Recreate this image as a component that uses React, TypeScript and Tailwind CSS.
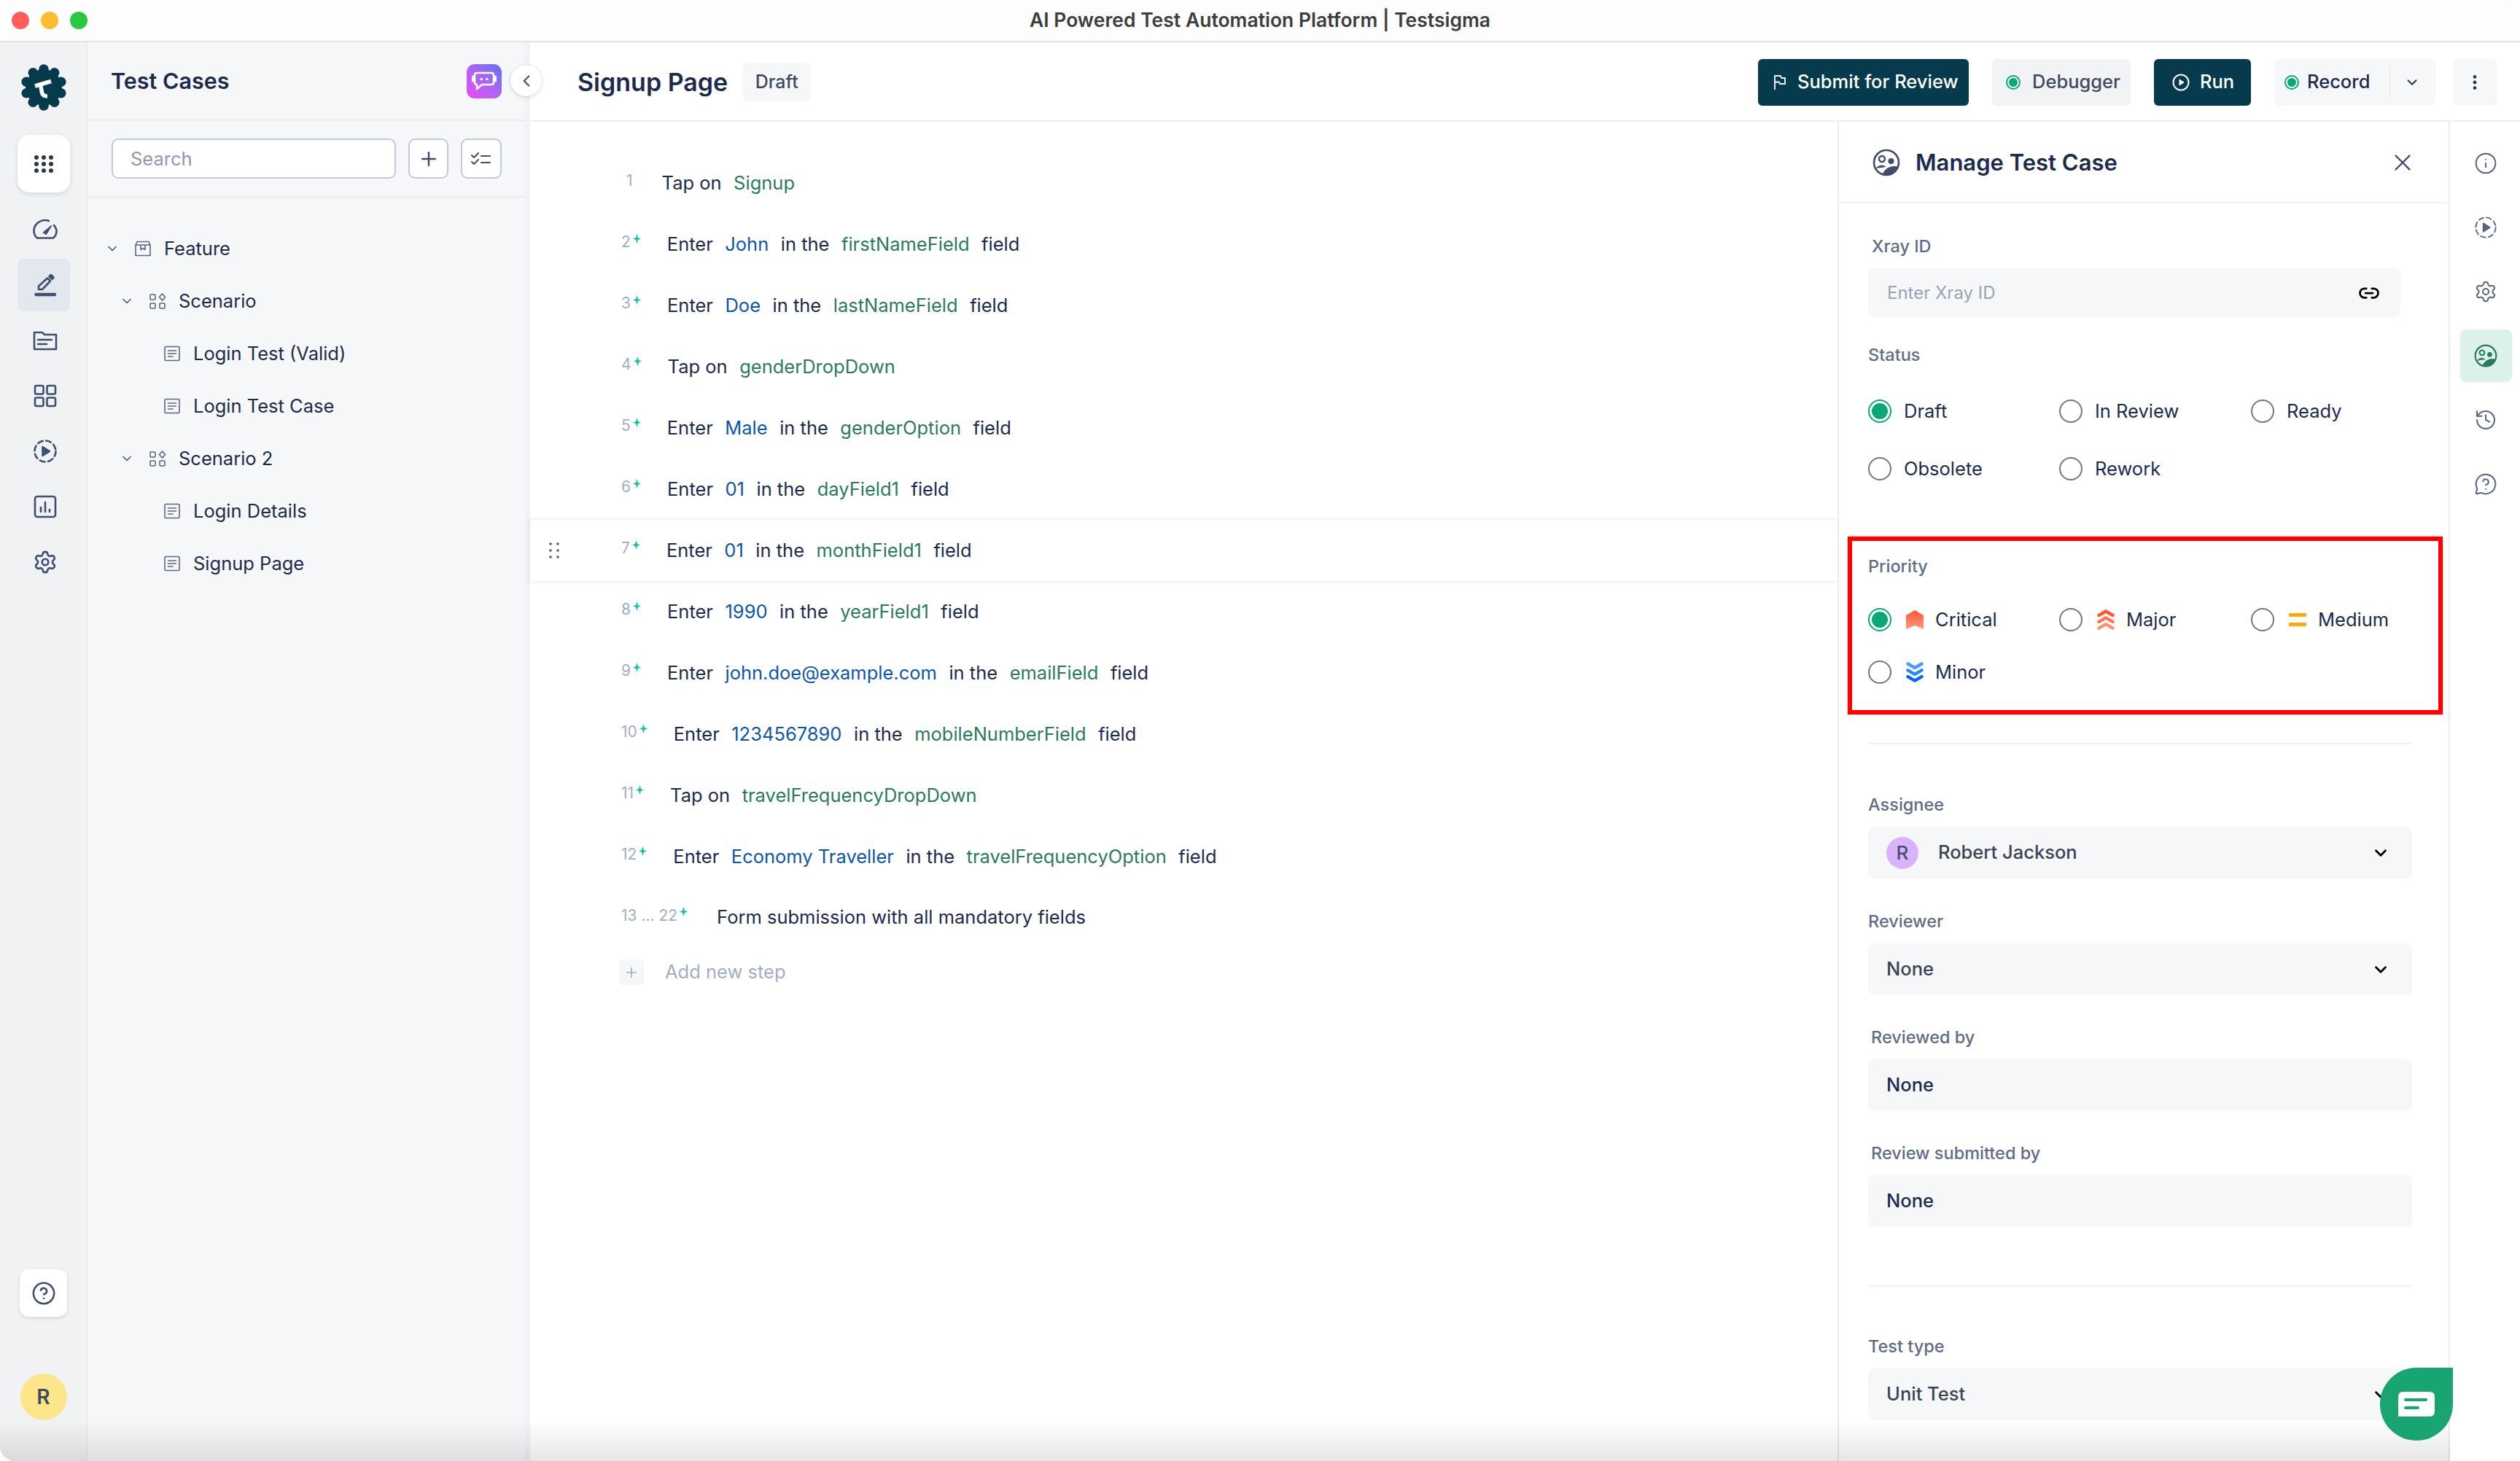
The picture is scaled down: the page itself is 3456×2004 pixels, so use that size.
import {
  ChevronDown,
  ChevronLeft,
  CircleHelp,
  EllipsisVertical,
  Info,
  Link2,
  History,
  MessageCircleQuestion,
  Plus,
  Settings,
  X,
} from 'lucide-react';

type Part = [string, 't' | 'b' | 'g'];

const steps: { n: string; parts: Part[]; hover?: boolean }[] = [
  { n: '2', parts: [['Enter', 't'], ['John', 'b'], ['in the', 't'], ['firstNameField', 'g'], ['field', 't']] },
  { n: '3', parts: [['Enter', 't'], ['Doe', 'b'], ['in the', 't'], ['lastNameField', 'g'], ['field', 't']] },
  { n: '4', parts: [['Tap on', 't'], ['genderDropDown', 'g']] },
  { n: '5', parts: [['Enter', 't'], ['Male', 'b'], ['in the', 't'], ['genderOption', 'g'], ['field', 't']] },
  { n: '6', parts: [['Enter', 't'], ['01', 'b'], ['in the', 't'], ['dayField1', 'g'], ['field', 't']] },
  { n: '7', hover: true, parts: [['Enter', 't'], ['01', 'b'], ['in the', 't'], ['monthField1', 'g'], ['field', 't']] },
  { n: '8', parts: [['Enter', 't'], ['1990', 'b'], ['in the', 't'], ['yearField1', 'g'], ['field', 't']] },
  { n: '9', parts: [['Enter', 't'], ['john.doe@example.com', 'b'], ['in the', 't'], ['emailField', 'g'], ['field', 't']] },
  { n: '10', parts: [['Enter', 't'], ['1234567890', 'b'], ['in the', 't'], ['mobileNumberField', 'g'], ['field', 't']] },
  { n: '11', parts: [['Tap on', 't'], ['travelFrequencyDropDown', 'g']] },
  { n: '12', parts: [['Enter', 't'], ['Economy Traveller', 'b'], ['in the', 't'], ['travelFrequencyOption', 'g'], ['field', 't']] },
];

const partColor = { t: 'text-[#1c2a4d]', b: 'text-[#0d56a6]', g: 'text-[#2b7a5e]' };

function Sparkle() {
  return (
    <svg width="11" height="13" viewBox="0 0 11 13" className="mt-[-16px] ml-[3px] shrink-0">
      <path d="M5.5 0 L7 5 L11 6.5 L7 8 L5.5 13 L4 8 L0 6.5 L4 5 z" fill="#14c4a4" />
    </svg>
  );
}

function Logo() {
  const bumps = [0, 1, 2, 3, 4, 5, 6, 7, 8, 9];
  return (
    <svg width="64" height="64" viewBox="0 0 64 64">
      <circle cx="32" cy="32" r="25" fill="#063b4d" />
      {bumps.map((b) => (
        <circle
          key={b}
          cx={32 + 25 * Math.cos((b * Math.PI) / 5 - Math.PI / 2)}
          cy={32 + 25 * Math.sin((b * Math.PI) / 5 - Math.PI / 2)}
          r="6.8"
          fill="#063b4d"
        />
      ))}
      <path d="M27 25 L29.5 39 Q30.5 44 37 44 M20 30 L42 23.5" stroke="white" strokeWidth="5.5" fill="none" strokeLinejoin="round" />
    </svg>
  );
}

function RailIcon({ children, active }: { children: React.ReactNode; active?: boolean }) {
  return (
    <div className={`w-[72px] h-[72px] flex items-center justify-center rounded-[8px] pl-[4px] ${active ? 'bg-[#e3e7ee]' : ''}`}>
      <svg width="34" height="34" viewBox="0 0 34 34" fill="none" stroke="#3f4f6e" strokeWidth="2.6" strokeLinecap="round" strokeLinejoin="round">
        {children}
      </svg>
    </div>
  );
}

function DashedPlay({ color = '#3f4f6e' }: { color?: string }) {
  return (
    <>
      <circle cx="17" cy="17" r="14.5" stroke={color} strokeDasharray="7 4.5" />
      <path d="M13.5 11 L23 17 L13.5 23 z" fill={color} stroke={color} />
    </>
  );
}

function TreeChevron() {
  return <ChevronDown size={20} className="text-[#4a5873] shrink-0" strokeWidth={2} />;
}

function ScenarioIcon() {
  return (
    <svg width="22" height="22" viewBox="0 0 22 22" fill="none" stroke="#5a6883" strokeWidth="1.6" className="shrink-0">
      <rect x="1" y="2" width="7" height="7" rx="1" />
      <rect x="1" y="14" width="7" height="7" rx="1" />
      <rect x="14" y="14" width="7" height="7" rx="1" />
      <path d="M17.5 1 L21.5 5.5 L17.5 10 L13.5 5.5 z" />
    </svg>
  );
}

function CaseIcon() {
  return (
    <svg width="22" height="22" viewBox="0 0 22 22" fill="none" stroke="#5a6883" strokeWidth="1.6" strokeLinecap="round" className="shrink-0">
      <rect x="1" y="1.5" width="20" height="19" rx="1.5" />
      <path d="M5.5 7 H16.5 M5.5 11 H16.5 M5.5 15 H12" />
    </svg>
  );
}

function FeatureIcon() {
  return (
    <svg width="22" height="22" viewBox="0 0 22 22" fill="none" stroke="#5a6883" strokeWidth="1.6" strokeLinejoin="round" className="shrink-0">
      <path d="M3 1.5 H19 L21 6 V20.5 H1 V6 z" />
      <path d="M1 6 H21 M8 6 V12.5 L11 10.5 L14 12.5 V6" />
    </svg>
  );
}

function TreeRow({ indent, icon, label, chevron }: { indent: string; icon: React.ReactNode; label: string; chevron?: boolean }) {
  return (
    <div className={`h-[72px] flex items-center ${indent}`}>
      {chevron ? <span className="w-[41px] shrink-0"><TreeChevron /></span> : null}
      {icon}
      <span className="ml-[18px] text-[25.5px] leading-none text-[#1c2a4d]">{label}</span>
    </div>
  );
}

function ManageIcon({ color = '#3f4d68', size = 38 }: { color?: string; size?: number }) {
  return (
    <svg width={size} height={size} viewBox="0 0 38 38" fill="none" className="shrink-0">
      <circle cx="19" cy="19" r="17" stroke={color} strokeWidth="2.6" />
      <circle cx="13" cy="14" r="4" stroke={color} strokeWidth="2.4" />
      <circle cx="25.5" cy="17" r="4" fill={color} />
      <path d="M5 27 C10 21 16 23 18 25 M14 35 C18 26 26 23 35 25 C33 31 26 37 19 36 z" stroke={color} strokeWidth="1" fill={color} />
    </svg>
  );
}

function StatusDot() {
  return (
    <span className="w-[20px] h-[20px] rounded-full border-2 border-[#0aa874] p-[2px] shrink-0">
      <span className="block w-full h-full rounded-full bg-[#0aa874]" />
    </span>
  );
}

function Radio({ checked }: { checked?: boolean }) {
  return (
    <span className={`w-[32px] h-[32px] rounded-full border-2 flex items-center justify-center shrink-0 bg-white ${checked ? 'border-[#0aa874]' : 'border-[#767676]'}`}>
      {checked ? <span className="w-[22px] h-[22px] rounded-full bg-[#0aa874]" /> : null}
    </span>
  );
}

function RadioItem({ label, checked, icon }: { label: string; checked?: boolean; icon?: React.ReactNode }) {
  return (
    <div className="flex items-center">
      <Radio checked={checked} />
      {icon ? <span className="ml-[20px] mr-[16px] w-[24px] flex justify-center">{icon}</span> : <span className="w-[17px]" />}
      <span className="text-[25.5px] leading-none text-[#1c2a4d]">{label}</span>
    </div>
  );
}

function FieldLabel({ children, className = '' }: { children: React.ReactNode; className?: string }) {
  return <div className={`h-[30px] flex items-center text-[23.5px] font-medium text-[#5f6c85] ${className}`}>{children}</div>;
}

function Box({ value, chevron, color = 'text-[#1c2a4d]', avatar }: { value: string; chevron?: boolean; color?: string; avatar?: boolean }) {
  return (
    <div className="mt-[15px] h-[71px] w-[746px] rounded-[8px] bg-[#f6f7f9] flex items-center justify-between pl-[25px] pr-[30px]">
      <div className={`flex items-center text-[25.5px] font-medium ${color}`}>
        {avatar ? (
          <span className="w-[44px] h-[44px] mr-[27px] rounded-full bg-[#d8b4fe] flex items-center justify-center text-[26px] text-[#475066]">R</span>
        ) : null}
        {value}
      </div>
      {chevron ? <ChevronDown size={26} className="text-black" strokeWidth={2.6} /> : null}
    </div>
  );
}

function SideIcon({ children, active }: { children: React.ReactNode; active?: boolean }) {
  return (
    <div className={`w-[71px] h-[72px] rounded-[8px] flex items-center justify-center ${active ? 'bg-[#dcf1e7]' : ''}`}>{children}</div>
  );
}

function Chevrons({ up }: { up?: boolean }) {
  const cols = up ? ['#ff5630', '#ff7452', '#ff8f73'] : ['#4c9aff', '#2684ff', '#0065ff'];
  const d = up ? 'M2.5 8 L12 2.5 L21.5 8' : 'M2.5 2.5 L12 8 L21.5 2.5';
  return (
    <svg width="24" height="28" viewBox="0 0 24 28" fill="none">
      {cols.map((c, i) => (
        <path key={i} d={d} stroke={c} strokeWidth="4.4" strokeLinecap="round" strokeLinejoin="round" transform={`translate(0 ${i * 8.8})`} />
      ))}
    </svg>
  );
}

export default function App() {
  return (
    <div className="relative w-[3456px] h-[2004px] overflow-hidden rounded-[20px] bg-white flex flex-col [font-family:Inter,sans-serif]">
      {/* Title bar */}
      <div className="relative h-[58px] shrink-0 bg-[#fdfdfd] border-b-2 border-[#e2e2e2] flex items-center justify-center">
        <div className="absolute left-[16px] top-[16px] flex gap-[16px]">
          <span className="w-[24px] h-[24px] rounded-full bg-[#ff5f57]" />
          <span className="w-[24px] h-[24px] rounded-full bg-[#febc2e]" />
          <span className="w-[24px] h-[24px] rounded-full bg-[#28c840]" />
        </div>
        <span className="text-[26.5px] font-semibold text-[#3d3d3d]">AI Powered Test Automation Platform | Testsigma</span>
      </div>

      <div className="flex-1 flex min-h-0">
        {/* Left rail */}
        <div className="w-[120px] shrink-0 bg-[#f1f2f4] border-r border-[#e4e6ea] flex flex-col items-center pt-[30px] pb-[56px]">
          <Logo />
          <div className="mt-[33px] w-[72px] h-[79px] rounded-[16px] bg-white shadow-[0_2px_6px_rgba(0,0,0,0.12)] flex items-center justify-center">
            <svg width="26" height="26" viewBox="0 0 26 26" fill="#2c3648">
              {[3, 13, 23].map((x) => [4, 13, 22].map((y) => <circle key={`${x}-${y}`} cx={x} cy={y} r="3" />))}
            </svg>
          </div>
          <div className="mt-[15px] flex flex-col gap-[4px]">
            <RailIcon>
              <path d="M6 28.5 C3 26 1.5 22.5 1.5 19 C1.5 10.5 8.5 4 17 4 C19 4 20.5 4.3 22 5 M29 11 C31 13.5 32.5 16 32.5 19 C32.5 22.5 31 26 28 28.5 H6" />
              <path d="M25.6 11.6 L14.3 21 L18.3 23.3 z" fill="#3f4f6e" strokeWidth="1.4" />
            </RailIcon>
            <RailIcon active>
              <path d="M8 23 L8 18.5 L20 7.5 L24 11.5 L13 23 z" />
              <path d="M22.5 5 L25 3 L28.5 6.5 L26.5 9 z" fill="#3f4f6e" />
              <path d="M4.5 30 H30" strokeWidth="4.4" />
            </RailIcon>
            <RailIcon>
              <path d="M2 6 H13 L16 9 H32 V29 H2 z" />
              <path d="M7 16 H26 M7 22 H19" />
            </RailIcon>
            <RailIcon>
              <rect x="3" y="3" width="11.5" height="11.5" rx="2" />
              <rect x="19.5" y="3" width="11.5" height="11.5" rx="2" />
              <rect x="3" y="19.5" width="11.5" height="11.5" rx="2" />
              <rect x="19.5" y="19.5" width="11.5" height="11.5" rx="2" />
            </RailIcon>
            <RailIcon>
              <DashedPlay />
            </RailIcon>
            <RailIcon>
              <rect x="3" y="3" width="28" height="28" rx="3" />
              <path d="M11 24 V18 M17 24 V11 M23 24 V21" />
            </RailIcon>
            <div className="w-[72px] h-[72px] flex items-center justify-center pl-[4px]">
              <Settings size={34} className="text-[#3f4f6e]" strokeWidth={1.9} />
            </div>
          </div>
          <div className="mt-auto w-[65px] h-[65px] rounded-[12px] bg-white shadow-[0_2px_5px_rgba(0,0,0,0.12)] flex items-center justify-center">
            <CircleHelp size={34} className="text-[#3f4f6e]" strokeWidth={1.8} />
          </div>
          <div className="mt-[78px] w-[64px] h-[64px] rounded-full bg-[#fde68a] flex items-center justify-center text-[28px] font-semibold text-[#3f4a5f]">R</div>
        </div>

        {/* Test case tree */}
        <div className="relative w-[607px] shrink-0 bg-[#f6f7f9] border-r-[7px] border-[#f1f2f4] flex flex-col">
          <div className="h-[108px] shrink-0 border-b-2 border-[#e9ebef] flex items-center justify-between pl-[32px] pr-[32px]">
            <span className="text-[30.5px] font-semibold text-[#1c2a4d]">Test Cases</span>
            <div className="w-[48px] h-[47px] rounded-[11px] bg-gradient-to-tr from-[#f043f0] to-[#5b70f6]">
              <svg width="48" height="47" viewBox="0 0 48 47" fill="none">
                <path d="M14 12 H34 Q37 12 37 15 V25 Q37 28 34 28 H21 L14 34 V28 Q11 28 11 25 V15 Q11 12 14 12 z" stroke="white" strokeWidth="2.6" strokeLinejoin="round" />
                <path d="M8.5 17 V23 M39.5 17 V23" stroke="white" strokeWidth="3" strokeLinecap="round" />
                <path d="M18.5 20.5 H22 M26 20.5 H29.5" stroke="white" strokeWidth="2.6" />
              </svg>
            </div>
          </div>
          <div className="h-[105px] shrink-0 border-b-2 border-[#e9ebef] flex items-center gap-[17px] pl-[33px] pr-[32px]">
            <input
              readOnly
              placeholder="Search"
              className="w-[390px] h-[55px] rounded-[9px] border-2 border-[#c2c8d6] bg-white pl-[24px] text-[25.5px] placeholder:text-[#8e99ad] outline-none"
            />
            <div className="w-[55px] h-[55px] rounded-[9px] border-2 border-[#c2c8d6] bg-white flex items-center justify-center">
              <Plus size={30} className="text-[#3f4d68]" strokeWidth={2} />
            </div>
            <div className="w-[56px] h-[55px] rounded-[9px] border-2 border-[#c2c8d6] bg-white flex items-center justify-center">
              <svg width="28" height="18" viewBox="0 0 28 18" fill="none" stroke="#3f4d68" strokeWidth="2" strokeLinecap="round" strokeLinejoin="round">
                <path d="M1 4 L4 7 L10 1 M1 13 L4 16 L10 10 M14 5 H26 M14 14 H26" />
              </svg>
            </div>
          </div>
          <div className="pt-[34px]">
            <TreeRow indent="pl-[24px]" chevron icon={<FeatureIcon />} label="Feature" />
            <TreeRow indent="pl-[44px]" chevron icon={<ScenarioIcon />} label="Scenario" />
            <TreeRow indent="pl-[105px]" icon={<CaseIcon />} label="Login Test (Valid)" />
            <TreeRow indent="pl-[105px]" icon={<CaseIcon />} label="Login Test Case" />
            <TreeRow indent="pl-[44px]" chevron icon={<ScenarioIcon />} label="Scenario 2" />
            <TreeRow indent="pl-[105px]" icon={<CaseIcon />} label="Login Details" />
            <TreeRow indent="pl-[105px]" icon={<CaseIcon />} label="Signup Page" />
          </div>
          <div className="absolute left-[580px] top-[31px] w-[43px] h-[43px] rounded-full bg-white shadow-[0_1px_5px_rgba(0,0,0,0.18)] flex items-center justify-center">
            <ChevronLeft size={26} className="text-[#4a5873]" strokeWidth={2.2} />
          </div>
        </div>

        {/* Main column */}
        <div className="flex-1 min-w-0 flex flex-col">
          <div className="h-[109px] shrink-0 border-b-2 border-[#eceef1] flex items-center pt-[2px] pl-[65px] pr-[32px]">
            <span className="text-[34px] font-semibold text-[#1c2a4d]">Signup Page</span>
            <span className="ml-[20px] h-[53px] w-[94px] rounded-[8px] bg-[#f6f7f9] flex items-center justify-center text-[25px] font-medium text-[#3f4a5f]">Draft</span>
            <div className="ml-auto flex items-center">
              <div className="w-[289px] h-[64px] rounded-[6px] bg-[#063b4d] flex items-center pl-[21px] gap-[15px] text-[25.5px] font-medium text-white">
                <svg width="18" height="22" viewBox="0 0 18 22" fill="none" stroke="white" strokeWidth="1.8" strokeLinejoin="round">
                  <path d="M2 21 V2 H10 L11 5 H16 V13 H9 L8 10.5 H2" />
                </svg>
                Submit for Review
              </div>
              <div className="ml-[32px] w-[190px] h-[64px] rounded-[6px] bg-[#f2f3f5] flex items-center pl-[19px] gap-[16px] text-[25.5px] font-medium text-[#3f4a5f]">
                <StatusDot />
                Debugger
              </div>
              <div className="ml-[32px] w-[133px] h-[64px] rounded-[6px] bg-[#063b4d] flex items-center pl-[25px] gap-[14px] text-[25.5px] font-medium text-white">
                <svg width="24" height="24" viewBox="0 0 24 24" fill="none" stroke="white" strokeWidth="2">
                  <circle cx="12" cy="12" r="10.5" />
                  <path d="M10 8 L16 12 L10 16 z" fill="white" strokeWidth="1" />
                </svg>
                Run
              </div>
              <div className="ml-[32px] w-[221px] h-[64px] rounded-[6px] bg-[#f6f7f9] flex items-center pl-[14px] text-[25.5px] font-medium text-[#1c2a4d]">
                <StatusDot />
                <span className="ml-[11px]">Record</span>
                <span className="ml-[27px] w-[1px] h-[44px] bg-[#e4e6ea]" />
                <ChevronDown size={22} className="ml-[19px] text-[#1c2a4d]" strokeWidth={2} />
              </div>
              <div className="ml-[24px] w-[60px] h-[64px] rounded-[6px] bg-[#f6f7f9] flex items-center justify-center">
                <EllipsisVertical size={26} className="text-[#2c3648]" strokeWidth={2.4} />
              </div>
            </div>
          </div>

          <div className="flex-1 min-h-0 flex">
            {/* Steps */}
            <div className="w-[1793px] shrink-0 pt-[42px]">
              <div className="h-[84px] flex items-center pl-[132px]">
                <span className="text-[21px] text-[#a3adc2] mt-[-6px]">1</span>
                <span className="ml-[40px] flex gap-[16.5px] text-[25.5px]">
                  <span className="text-[#1c2a4d]">Tap on</span>
                  <span className="text-[#2b7a5e]">Signup</span>
                </span>
              </div>
              {steps.map((s) => (
                <div
                  key={s.n}
                  className={`relative h-[84px] flex items-center pl-[125px] ${s.hover ? 'shadow-[0_0_5px_rgba(0,0,0,0.13)]' : ''}`}
                >
                  {s.hover ? (
                    <svg width="14" height="22" viewBox="0 0 14 22" fill="#4a5873" className="absolute left-[26px] top-[31px]">
                      {[2, 12].map((x) => [2, 11, 20].map((y) => <circle key={`${x}-${y}`} cx={x} cy={y} r="1.8" />))}
                    </svg>
                  ) : null}
                  <span className="text-[21px] text-[#a3adc2] mt-[-6px]">{s.n}</span>
                  <Sparkle />
                  <span className="ml-[36px] flex gap-[16.5px] text-[25.5px]">
                    {s.parts.map(([text, kind], i) => (
                      <span key={i} className={partColor[kind]}>{text}</span>
                    ))}
                  </span>
                </div>
              ))}
              <div className="h-[83px] flex items-center pl-[125px]">
                <span className="text-[21px] text-[#a3adc2] mt-[-6px]">13 ... 22</span>
                <Sparkle />
                <span className="ml-[40px] text-[25.5px] text-[#1c2a4d]">Form submission with all mandatory fields</span>
              </div>
              <div className="h-[67px] flex items-center pl-[122px]">
                <span className="w-[34px] h-[36px] rounded-[6px] bg-[#f6f7f9] flex items-center justify-center">
                  <Plus size={22} className="text-[#a3adc2]" strokeWidth={1.8} />
                </span>
                <span className="ml-[29px] text-[25.5px] text-[#a3adc2]">Add new step</span>
              </div>
            </div>

            {/* Manage panel */}
            <div className="relative w-[840px] shrink-0 border-x-2 border-[#e9ebef] overflow-hidden">
              <div className="h-[112px] border-b-2 border-[#f1f2f4] flex items-center justify-between pt-[2px] pl-[46px] pr-[44px]">
                <div className="flex items-center gap-[21px]">
                  <ManageIcon />
                  <span className="text-[31px] font-semibold text-[#1c2a4d]">Manage Test Case</span>
                </div>
                <X size={38} className="text-[#3f4a5f]" strokeWidth={1.5} />
              </div>
              <div className="pl-[40px]">
                <FieldLabel className="mt-[44px] pl-[5px]">Xray ID</FieldLabel>
                <div className="mt-[15px] h-[68px] w-[730px] rounded-[8px] bg-[#f6f7f9] flex items-center justify-between pl-[26px] pr-[28px]">
                  <span className="text-[24px] text-[#9aa3b5]">Enter Xray ID</span>
                  <Link2 size={30} className="text-black" strokeWidth={2.2} />
                </div>
                <FieldLabel className="mt-[36px]">Status</FieldLabel>
                <div className="mt-[22px] grid grid-cols-[262px_263px_auto] auto-rows-[79px] items-center">
                  <RadioItem label="Draft" checked />
                  <RadioItem label="In Review" />
                  <RadioItem label="Ready" />
                  <RadioItem label="Obsolete" />
                  <RadioItem label="Rework" />
                </div>
                <FieldLabel className="mt-[80px]">Priority</FieldLabel>
                <div className="mt-[22px] grid grid-cols-[262px_263px_auto] auto-rows-[72px] items-center">
                  <RadioItem
                    label="Critical"
                    checked
                    icon={
                      <svg width="24" height="27" viewBox="0 0 24 27">
                        <defs>
                          <linearGradient id="crit" x1="0" y1="0" x2="0" y2="1">
                            <stop offset="0" stopColor="#ff5630" />
                            <stop offset="1" stopColor="#ff9a80" />
                          </linearGradient>
                        </defs>
                        <path d="M12 0 L24 7 V26 L12 21 L0 26 V7 z" fill="url(#crit)" />
                      </svg>
                    }
                  />
                  <RadioItem label="Major" icon={<Chevrons up />} />
                  <RadioItem
                    label="Medium"
                    icon={
                      <svg width="24" height="22" viewBox="0 0 24 22" fill="#ffab00">
                        <rect y="2" width="24" height="5" rx="1" />
                        <rect y="15" width="24" height="5" rx="1" />
                      </svg>
                    }
                  />
                  <RadioItem label="Minor" icon={<Chevrons />} />
                </div>
                <div className="mt-[61px] h-[2px] w-[746px] bg-[#f1f2f4]" />
                <FieldLabel className="mt-[68px]">Assignee</FieldLabel>
                <Box value="Robert Jackson" chevron avatar color="text-[#3a4454]" />
                <FieldLabel className="mt-[44px]">Reviewer</FieldLabel>
                <Box value="None" chevron color="text-[#3a4454]" />
                <FieldLabel className="mt-[43px] pl-[4px]">Reviewed by</FieldLabel>
                <Box value="None" />
                <FieldLabel className="mt-[43px] pl-[4px]">Review submitted by</FieldLabel>
                <Box value="None" />
                <div className="mt-[80px] h-[2px] w-[746px] bg-[#f1f2f4]" />
                <FieldLabel className="mt-[67px]">Test type</FieldLabel>
                <Box value="Unit Test" chevron color="text-[#3a4454]" />
              </div>
            </div>

            {/* Right rail */}
            <div className="flex-1 flex flex-col items-center pt-[21px] pl-[2px] gap-[16px]">
              <SideIcon><Info size={32} className="text-[#566480]" strokeWidth={1.5} /></SideIcon>
              <SideIcon>
                <svg width="32" height="32" viewBox="0 0 34 34" fill="none" stroke="#566480" strokeWidth="2" strokeLinecap="round" strokeLinejoin="round">
                  <DashedPlay color="#566480" />
                </svg>
              </SideIcon>
              <SideIcon><Settings size={32} className="text-[#566480]" strokeWidth={1.5} /></SideIcon>
              <SideIcon active><ManageIcon color="#2b7a5e" size={32} /></SideIcon>
              <SideIcon><History size={32} className="text-[#566480]" strokeWidth={1.5} /></SideIcon>
              <SideIcon><MessageCircleQuestion size={32} className="text-[#566480]" strokeWidth={1.5} /></SideIcon>
            </div>
          </div>
        </div>
      </div>

      {/* Bottom window shade */}
      <div className="absolute left-0 bottom-0 w-[3360px] h-[56px] bg-gradient-to-t from-black/10 to-transparent pointer-events-none" />

      {/* Annotation around the priority group */}
      <div className="absolute left-[2534px] top-[736px] w-[816px] h-[244px] border-[6px] border-[#ff0000] shadow-[0_0_3px_rgba(0,0,0,0.3)] pointer-events-none" />

      {/* Chat bubble */}
      <div className="absolute left-[3264px] top-[1876px] w-[100px] h-[100px] rounded-full rounded-tr-[8px] bg-[#18a572] flex items-center justify-center">
        <svg width="52" height="36" viewBox="0 0 52 36">
          <path d="M8 1 H44 Q51 1 51 8 V28 Q51 35 44 35 H1 V8 Q1 1 8 1 z" fill="white" />
          <path d="M11 12 H39 M11 23 H28" stroke="#18a572" strokeWidth="4" strokeLinecap="round" />
        </svg>
      </div>
    </div>
  );
}
